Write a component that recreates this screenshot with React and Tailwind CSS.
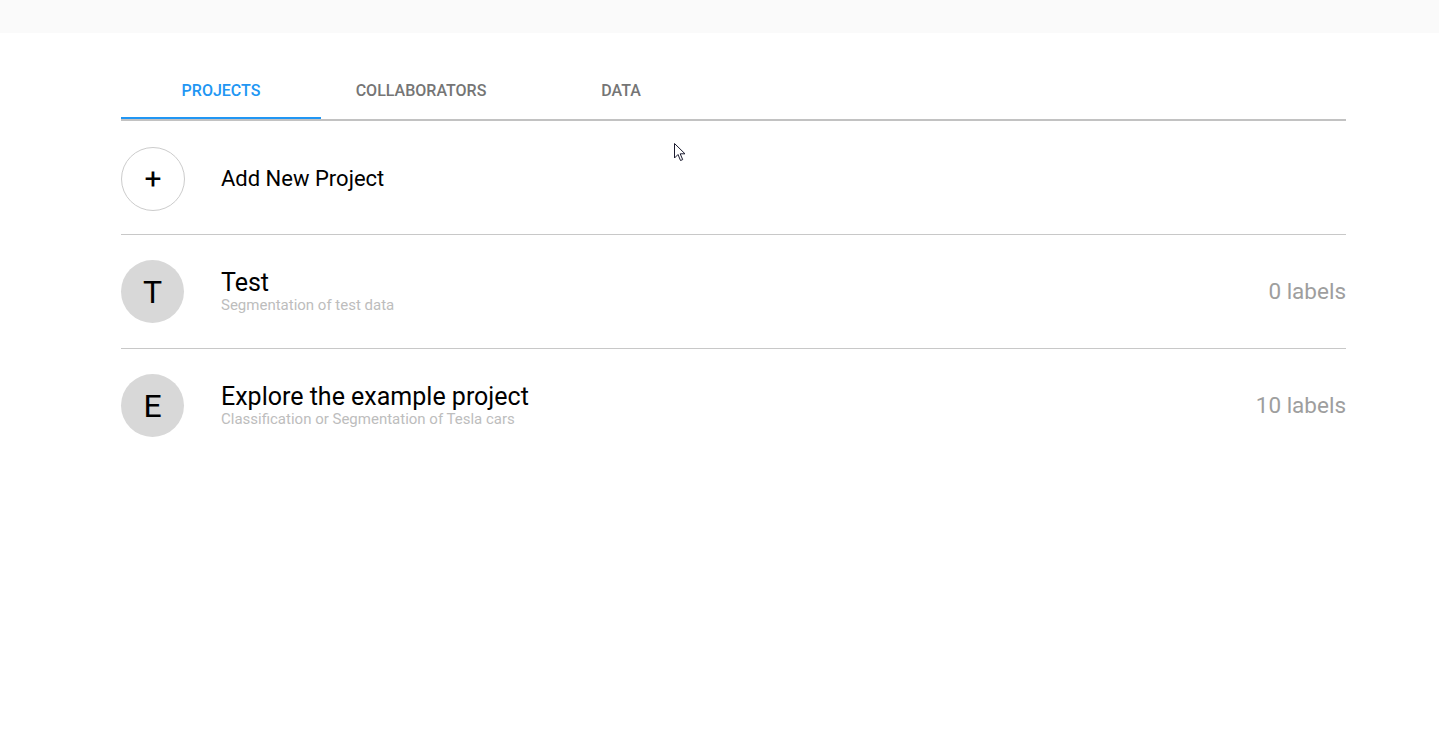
import React from "react";

function Cursor() {
  return (
    <svg className="absolute left-[674px] top-[143px]" width="14" height="20" viewBox="0 0 14 20">
      <path d="M0.5 0.5 L0.5 15 L4 11.5 L6.5 17.5 L8.7 16.6 L6.2 10.8 L11 10.8 Z" fill="white" stroke="#1a1a2e" strokeWidth="1" strokeLinejoin="round" />
    </svg>
  );
}

function Row({ letter, title, subtitle, labels, add, last }) {
  return (
    <div
      className={
        "flex items-center " +
        (add ? "pt-[26px] pb-[23px] border-b border-[#c8c8c8]" : last ? "pt-[25px] pb-[25px]" : "pt-[25px] pb-[25px] border-b border-[#c8c8c8]")
      }
    >
      {add ? (
        <div className="flex h-16 w-16 shrink-0 items-center justify-center rounded-full border border-[#cccccc] text-[30px] leading-none text-black">
          +
        </div>
      ) : (
        <div className="flex h-[63px] w-[63px] shrink-0 items-center justify-center rounded-full bg-[#d8d8d8] text-[32px] leading-none text-black">
          {letter}
        </div>
      )}
      <div className={(add ? "ml-[36px]" : "ml-[37px]") + " flex flex-1 flex-col"}>
        {add ? (
          <div className="text-[22px] leading-[26px] text-black">{title}</div>
        ) : (
          <>
            <div className="text-[25px] leading-[27px] text-black">{title}</div>
            <div className="text-[15px] leading-[18px] text-[#bdbdbd]">{subtitle}</div>
          </>
        )}
      </div>
      {labels && <div className="text-[22.5px] text-[#9e9e9e]">{labels}</div>}
    </div>
  );
}

export default function App() {
  return (
    <div className="relative min-h-[745px] w-full bg-white font-['Roboto',sans-serif]">
      <div className="h-[33px] bg-[#fafafa]" />
      <div className="ml-[121px] w-[1225px] pt-[31px]">
        <div className="flex border-b-2 border-[#c2c2c2]">
          <div className="flex h-[55px] w-[200px] items-center justify-center border-b-2 border-[#2196f3] text-[16px] font-medium uppercase text-[#2196f3]">
            Projects
          </div>
          <div className="flex h-[55px] w-[200px] items-center justify-center border-b-2 border-transparent text-[16px] font-medium uppercase text-[#757575]">
            Collaborators
          </div>
          <div className="flex h-[55px] w-[200px] items-center justify-center border-b-2 border-transparent text-[16px] font-medium uppercase text-[#757575]">
            Data
          </div>
        </div>
        <Row add title="Add New Project" />
        <Row letter="T" title="Test" subtitle="Segmentation of test data" labels="0 labels" />
        <Row last letter="E" title="Explore the example project" subtitle="Classification or Segmentation of Tesla cars" labels="10 labels" />
      </div>
      <Cursor />
    </div>
  );
}
